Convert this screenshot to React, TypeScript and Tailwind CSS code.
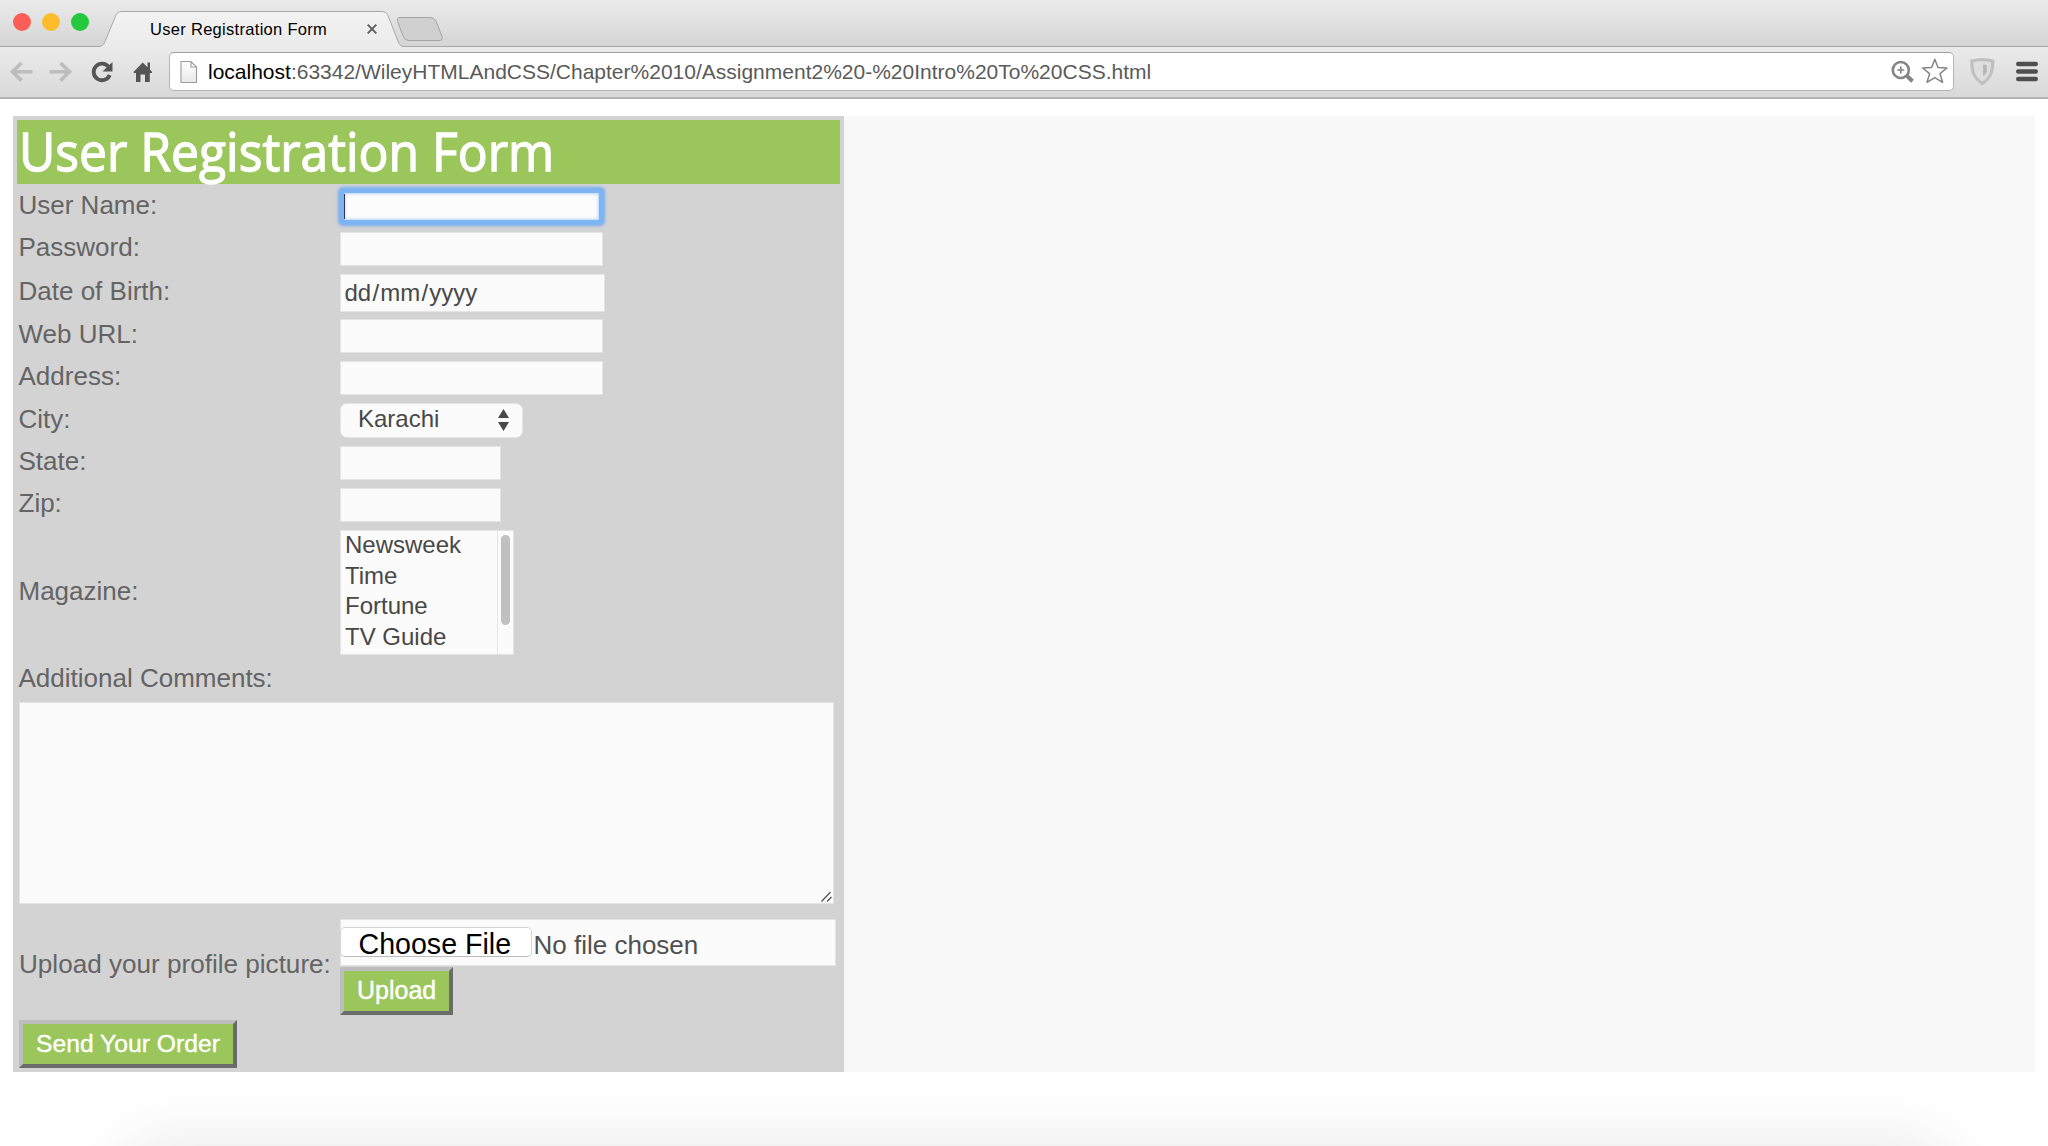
import React from 'react';

function TabStrip() {
  return (
    <div className="flex h-[47px] border-b border-[#a6a6a6] bg-linear-to-b from-[#ebebeb] to-[#d5d5d5]">
      <div className="flex w-[100px] shrink-0 items-start gap-[11px] pl-[12.5px] pt-[13px]">
        <span className="size-[18px] rounded-full bg-[#fb5e56]" />
        <span className="size-[18px] rounded-full bg-[#fcbc2c]" />
        <span className="size-[18px] rounded-full bg-[#25c93e]" />
      </div>
      <div className="relative h-[47px] w-[304px] shrink-0">
        <svg className="absolute inset-0" width="304" height="47" viewBox="0 0 304 47">
          <defs>
            <linearGradient id="tabFill" x1="0" y1="0" x2="0" y2="1">
              <stop offset="0" stopColor="#f3f3f3" />
              <stop offset="1" stopColor="#ebebeb" />
            </linearGradient>
          </defs>
          <path
            d="M-2 47 V46.5 C3 46.5 4 44 6 39 L15 17.5 C17 12.5 18.5 11.5 22 11.5 H281 C286 11.5 287 13.5 288.500 17 L298 41 C299.500 45 300.500 46.500 304 46.5 V47 Z"
            fill="url(#tabFill)"
          />
          <path
            d="M-2 46.5 C3 46.5 4 44 6 39 L15 17.5 C17 12.5 18.5 11.5 22 11.5 H281 C286 11.5 287 13.5 288.500 17 L298 41 C299.500 45 300.500 46.500 304 46.5"
            fill="none"
            stroke="#a8a8a8"
          />
        </svg>
        <div className="relative flex h-full items-start pl-[50px] pt-[19px] leading-5">
          <span className="w-[216.500px] whitespace-nowrap text-[16.5px] tracking-[0.3px] text-black">User Registration Form</span>
          <svg className="mt-[5px]" width="10" height="10" viewBox="0 0 10 10" stroke="#5c5c5c" strokeWidth="1.9">
            <path d="M0.7 0.7 L9.300 9.300 M9.300 0.7 L0.7 9.300" />
          </svg>
        </div>
      </div>
      <svg className="-ml-2" width="50" height="46" viewBox="396 0 50 46">
        <path
          d="M400 17.5 H430 Q434.500 17.500 436 21 L442 36.500 Q443.500 40.500 439 40.500 H409 Q405 40.500 403.500 37 L397.500 21.500 Q396.500 17.500 400 17.5 Z"
          fill="#d0d0d0"
          stroke="#a4a4a4"
        />
      </svg>
    </div>
  );
}

function Toolbar() {
  return (
    <div className="flex h-[52px] items-start border-b-2 border-[#b2b2b2] bg-linear-to-b from-[#ebebeb] to-[#d9d9d9]">
      <svg className="shrink-0" width="169" height="50" viewBox="0 47 169 50">
        <g fill="none" stroke="#bdbdbd" strokeWidth="3.6" strokeLinejoin="miter">
          <path d="M21.500 63 L12.500 71.800 L21.500 80.600 M13 71.800 H32.500" />
          <path d="M60.500 63 L69.500 71.800 L60.500 80.600 M69 71.800 H49.500" />
        </g>
        <path d="M108.500 66.800 A8.300 8.300 0 1 0 109.700 75" fill="none" stroke="#555" strokeWidth="3.800" />
        <path d="M112.500 62 V71.500 H102.500 Z" fill="#555" />
        <path
          d="M142.700 62.500 L147.500 67.200 V62.500 H150 V69.700 L152 71.800 V73 H149.800 V82 H145 V74.500 H140.500 V82 H136 V73 H133.700 V71.800 Z"
          fill="#555"
        />
      </svg>
      <div className="mt-[5px] flex h-[39px] w-[1785px] shrink-0 items-center rounded-[5px] border border-[#b4b4b4] border-t-[#a2a2a2] bg-white pl-[10px] pr-1">
        <svg className="shrink-0" width="18" height="24" viewBox="0 0 18 24">
          <defs>
            <linearGradient id="pageFill" x1="0" y1="0" x2="0" y2="1">
              <stop offset="0" stopColor="#fff" />
              <stop offset="1" stopColor="#e8e8e8" />
            </linearGradient>
          </defs>
          <path d="M1 1.500 H11 L16.500 7 V22.500 H1 Z M11 1.500 V7 H16.500" fill="url(#pageFill)" stroke="#9b9b9b" strokeWidth="1.1" />
        </svg>
        <span className="ml-[10px] grow whitespace-nowrap pt-px text-[21px] leading-[38px] text-[#5a5a5a]">
          <span className="text-black">localhost</span>
          :63342/WileyHTMLAndCSS/Chapter%2010/Assignment2%20-%20Intro%20To%20CSS.html
        </span>
        <svg className="shrink-0" width="58" height="38" viewBox="1891 53 58 38" fill="none">
          <circle cx="1900.800" cy="70" r="8" stroke="#858585" strokeWidth="2.600" />
          <path d="M1906.800 75.800 L1912.500 81.300" stroke="#858585" strokeWidth="4" />
          <path d="M1897.300 70 H1904.300 M1900.800 66.500 V73.500" stroke="#858585" strokeWidth="1.700" />
          <path
            d="M1934.800 59.300 L1938 67.600 L1947 68 L1940 73.700 L1942.600 82.300 L1934.800 77.600 L1927 82.300 L1929.600 73.700 L1922.600 68 L1931.600 67.600 Z"
            stroke="#858585"
            strokeWidth="1.500"
            strokeLinejoin="round"
          />
        </svg>
      </div>
      <svg className="shrink-0" width="94" height="50" viewBox="1954 47 94 50">
        <path
          d="M1982.300 59.500 Q1988 59.800 1992.800 61 Q1993 68 1991 73.500 Q1988.500 79.500 1982.300 83.500 Q1976 79.500 1973.500 73.500 Q1971.500 68 1971.700 61 Q1976.500 59.800 1982.300 59.500 Z"
          fill="#dedede"
          stroke="#c0c0c0"
          strokeWidth="3.200"
        />
        <path d="M1983 64.500 L1986.800 65 V71.500 Q1986 74.500 1983 76.500 Z" fill="#b8b8b8" />
        <g stroke="#4f4f4f" strokeWidth="4.400" strokeLinecap="round">
          <path d="M2018.200 64 H2035.800 M2018.200 71.500 H2035.800 M2018.200 79 H2035.800" />
        </g>
      </svg>
    </div>
  );
}

function Field({ label, row, children }: { label: string; row: string; children: React.ReactNode }) {
  return (
    <div className={`flex items-center ${row}`}>
      <label className="w-[321px] shrink-0 pb-1 leading-[30px]">{label}</label>
      {children}
    </div>
  );
}

const box = 'border border-[#e4e4e4] bg-[#fbfbfb]';
const wide = `${box} h-[34px] w-[263px]`;
const narrow = `${box} h-[34px] w-[161.5px]`;
const bevel =
  'border-4 border-t-[#bdbdbd] border-l-[#bdbdbd] border-r-[#6b6b6b] border-b-[#6b6b6b] bg-[#9bc65b] text-white whitespace-nowrap [-webkit-text-stroke:0.4px_white]';

export default function App() {
  return (
    <div className="relative h-[1146px] w-[2048px] overflow-hidden bg-white font-['Liberation_Sans',Arial,sans-serif]">
      <TabStrip />
      <Toolbar />
      <main className="mx-[13px] mt-[17px] h-[956px] bg-[#f8f8f8]">
        <form className="h-full w-[831px] bg-[#d3d3d3] pt-1 text-[26px] text-[#646464]">
          <h1 className="mx-1 h-[64px] bg-[#9bc65b] pl-[2px] text-white">
            <span className="inline-block origin-left scale-x-[0.94] whitespace-nowrap font-['Open_Sans',sans-serif] text-[53px] font-medium leading-[61px] [-webkit-text-stroke:1.3px_white]">
              User Registration Form
            </span>
          </h1>
          <div className="flex flex-col gap-2 pl-[5.5px] pt-[6px]">
            <Field label="User Name:" row="h-[34px]">
              <div className="-mt-px flex h-[35px] w-[263px] items-center rounded-[3px] border-4 border-[#7db4f3] bg-[#fcfcfc] shadow-[0_0_3px_2px_#76aff0,inset_0_0_3px_1px_#b4d5fb]">
                <span className="h-[25px] w-[1.5px] bg-[#335]" />
              </div>
            </Field>
            <Field label="Password:" row="h-[34px]">
              <div className={wide} />
            </Field>
            <Field label="Date of Birth:" row="h-[37px]">
              <div className={`${box} h-[38px] w-[265.5px] whitespace-nowrap pl-1 text-[24px] leading-[35px] text-[#484848]`}>
                dd<span className="px-[1.2px]">/</span>mm<span className="px-[1.2px]">/</span>yyyy
              </div>
            </Field>
            <Field label="Web URL:" row="h-[34px]">
              <div className={wide} />
            </Field>
            <Field label="Address:" row="h-[34px]">
              <div className={wide} />
            </Field>
            <Field label="City:" row="h-[35px]">
              <div className="flex h-[35px] w-[183px] items-start justify-between rounded-[7px] border border-[#e4e4e4] bg-[#fbfbfb] pl-[17.5px] pr-[13px] text-[24px] leading-[30px] text-[#484848]">
                Karachi
                <svg className="mt-[5px]" width="11" height="22" viewBox="0 0 11 22" fill="#484848">
                  <path d="M5.500 0 L11 9 H0 Z M5.500 22 L11 13 H0 Z" />
                </svg>
              </div>
            </Field>
            <Field label="State:" row="h-[34px]">
              <div className={narrow} />
            </Field>
            <Field label="Zip:" row="h-[34px]">
              <div className={narrow} />
            </Field>
            <Field label="Magazine:" row="h-[125px]">
              <div className={`${box} flex h-[125px] w-[174px] justify-between`}>
                <ul className="pl-[4.5px] text-[24px] leading-[30.7px] text-[#484848]">
                  <li className="-mt-px">Newsweek</li>
                  <li>Time</li>
                  <li>Fortune</li>
                  <li>TV Guide</li>
                </ul>
                <div className="flex w-[15.5px] justify-center border-l border-[#e6e6e6] pt-1">
                  <div className="h-[90px] w-[9px] rounded-full bg-[#c0c0c0]" />
                </div>
              </div>
            </Field>
          </div>
          <div className="h-[47px] pl-[5.5px] leading-[47px]">Additional Comments:</div>
          <div className={`${box} ml-[6px] flex h-[202px] w-[815px] items-end justify-end`}>
            <svg className="mb-px mr-px" width="11" height="11" viewBox="0 0 11 11" stroke="#555" strokeWidth="1.300">
              <path d="M0.500 10.500 L9.500 1 M6 10.500 L10.500 6" />
            </svg>
          </div>
          <div className="mt-[15px] flex h-[96px] items-center pl-[6px]">
            <label className="w-[321px] shrink-0 whitespace-nowrap pb-1 text-[26.1px]">Upload your profile picture:</label>
            <div>
              <div className={`${box} flex h-[47px] w-[496px] items-start whitespace-nowrap pt-[7px] text-[#505050]`}>
                <span className="-ml-px h-[30px] w-[191.5px] rounded-[5px] border border-[#d6d6d6] border-b-[#bcbcbc] bg-white pl-[17.5px] text-[28.6px] leading-[32px] text-black">
                  Choose File
                </span>
                <span className="ml-[2px] text-[26px] leading-[36px]">No file chosen</span>
              </div>
              <div className={`${bevel} mt-px h-[48px] w-[112.5px] pl-[13px] text-[25px] leading-[39px]`}>Upload</div>
            </div>
          </div>
          <div className={`${bevel} ml-[6px] mt-[5px] h-[48px] w-[218px] pl-[13px] text-[24.7px] leading-[39px]`}>Send Your Order</div>
        </form>
      </main>
      <div className="absolute left-[130px] top-[1152px] h-[100px] w-[1812px] shadow-[0_0_70px_rgba(0,0,0,0.12)]" />
    </div>
  );
}
